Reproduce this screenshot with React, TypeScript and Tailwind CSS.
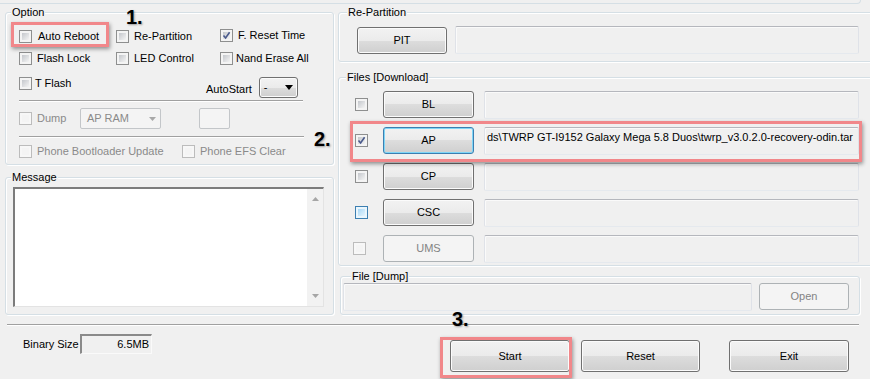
import type { ReactNode } from "react";

type CheckState = "off" | "on" | "disabled" | "hot";

function Check({ state = "off" }: { state?: CheckState }) {
  const outer =
    state === "disabled"
      ? "border-[#bcbcbc] bg-[#f7f7f7]"
      : state === "hot"
        ? "border-[#3c7fb1] bg-[#eaf6fd]"
        : "border-[#8e8f8f] bg-[#f4f4f4]";
  const inner =
    state === "disabled"
      ? "bg-[#f4f4f4]"
      : state === "hot"
        ? "bg-[linear-gradient(135deg,#a9d8f6,#e6f5fe)]"
        : "bg-[linear-gradient(135deg,#c4c7cc,#f4f4f4)]";
  return (
    <span
      className={`relative flex h-[13px] w-[13px] shrink-0 border p-[2px] ${outer}`}
    >
      <span className={`h-full w-full ${inner}`} />
      {state === "on" && (
        <svg
          className="absolute inset-0"
          width="11"
          height="11"
          viewBox="0 0 11 11"
        >
          <path
            d="M2.5 5.5 L4.6 8 L8.6 2.2"
            fill="none"
            stroke="#4a5a8c"
            strokeWidth="1.6"
          />
        </svg>
      )}
    </span>
  );
}

type BtnKind = "normal" | "focus" | "disabled";

function Btn({
  children,
  kind = "normal",
  className = "",
}: {
  children: ReactNode;
  kind?: BtnKind;
  className?: string;
}) {
  const look =
    kind === "disabled"
      ? "border-[#adb2b5] bg-[#f4f4f4] text-[#838383]"
      : kind === "focus"
        ? "border-[#3c7fb1] bg-[linear-gradient(to_bottom,#f2f2f2_0%,#ebebeb_50%,#dddddd_50%,#cfcfcf_100%)] shadow-[inset_0_0_0_1px_#7fd6f7]"
        : "border-[#707070] bg-[linear-gradient(to_bottom,#f2f2f2_0%,#ebebeb_50%,#dddddd_50%,#cfcfcf_100%)] shadow-[inset_0_0_0_1px_#fbfbfb]";
  return (
    <div
      className={`flex shrink-0 items-center justify-center rounded-[3px] border ${look} ${className}`}
    >
      {children}
    </div>
  );
}

function Field({
  children,
  className = "",
}: {
  children?: ReactNode;
  className?: string;
}) {
  return (
    <div
      className={`shrink-0 overflow-hidden whitespace-nowrap rounded-[2px] border border-t-[#b5b7bd] border-l-[#dfe2e8] border-r-[#dfe2e8] border-b-[#e5e9ee] bg-[#f0f0f0] shadow-[inset_1px_1px_0_#fafafa] ${className}`}
    >
      {children}
    </div>
  );
}

function Group({
  label,
  labelLeft,
  className = "",
  children,
}: {
  label: string;
  labelLeft: string;
  className?: string;
  children?: ReactNode;
}) {
  return (
    <div
      className={`relative rounded-[3px] border border-[#d5dfe5] shadow-[inset_1px_1px_0_#fff,1px_1px_0_#fff] ${className}`}
    >
      <span
        className={`absolute -top-[7px] bg-[#f0f0f0] px-[1px] leading-[13px] ${labelLeft}`}
      >
        {label}
      </span>
      {children}
    </div>
  );
}

function Sep({ className = "" }: { className?: string }) {
  return (
    <div
      className={`h-[2px] border-t border-b border-t-[#a0a0a0] border-b-white ${className}`}
    />
  );
}

const fileRows: {
  name: string;
  check: CheckState;
  kind: BtnKind;
  path?: string;
}[] = [
  { name: "BL", check: "off", kind: "normal" },
  {
    name: "AP",
    check: "on",
    kind: "focus",
    path: "ds\\TWRP GT-I9152 Galaxy Mega 5.8 Duos\\twrp_v3.0.2.0-recovery-odin.tar",
  },
  { name: "CP", check: "off", kind: "normal" },
  { name: "CSC", check: "hot", kind: "normal" },
  { name: "UMS", check: "disabled", kind: "disabled" },
];

const mark =
  "pointer-events-none absolute border-[3px] border-[#f1878a] shadow-[1px_2px_4px_rgba(0,0,0,0.4)]";
const step =
  "pointer-events-none absolute font-bold text-[20px] leading-[20px] text-black [text-shadow:1px_1px_2px_rgba(0,0,0,0.35)]";

export default function App() {
  return (
    <div className="relative h-[379px] w-[870px] overflow-hidden bg-[#f0f0f0] font-['Liberation_Sans',Arial,sans-serif] text-[11px] leading-[13px] text-black">
      <div className="h-[4px] w-[861px] rounded-br-[4px] border-r border-b border-[#d5dfe5]" />

      <div className="flex pt-[8px] pl-[5px]">
        {/* left column */}
        <div className="w-[329px] shrink-0">
          <Group label="Option" labelLeft="left-[5px]" className="h-[153px]">
            <div className="pt-[17px] pl-[13px]">
              <div className="flex h-[13px] items-center">
                <div className="flex w-[97px] items-center">
                  <Check />
                  <span className="ml-[6px]">Auto Reboot</span>
                </div>
                <div className="flex w-[104px] items-center">
                  <Check />
                  <span className="ml-[5px]">Re-Partition</span>
                </div>
                <div className="-mt-[2px] flex items-center">
                  <Check state="on" />
                  <span className="ml-[5px]">F. Reset Time</span>
                </div>
              </div>
              <div className="mt-[9px] flex h-[13px] items-center">
                <div className="flex w-[97px] items-center">
                  <Check />
                  <span className="ml-[5px]">Flash Lock</span>
                </div>
                <div className="flex w-[104px] items-center">
                  <Check />
                  <span className="ml-[5px]">LED Control</span>
                </div>
                <div className="-mt-[1px] flex items-center">
                  <Check />
                  <span className="ml-[3px]">Nand Erase All</span>
                </div>
              </div>
              <div className="mt-[12px] flex items-start">
                <div className="flex h-[13px] w-[187px] items-center">
                  <Check />
                  <span className="ml-[3px]">T Flash</span>
                </div>
                <div className="flex h-[21px] items-center">
                  <span className="mt-[3px]">AutoStart</span>
                  <Btn className="ml-[7px] h-[21px] w-[39px] !justify-between px-[4px]">
                    <span>-</span>
                    <svg width="8" height="5" viewBox="0 0 8 5">
                      <path d="M0 0 H8 L4 5 Z" fill="#000" />
                    </svg>
                  </Btn>
                </div>
              </div>
              <Sep className="mt-[2px] w-[284px]" />
              <div className="mt-[6px] flex h-[21px] items-center text-[#8a8a8a]">
                <div className="flex w-[61px] items-center">
                  <Check state="disabled" />
                  <span className="ml-[5px]">Dump</span>
                </div>
                <div className="flex h-[21px] w-[81px] items-center justify-between rounded-[2px] border border-[#c3c6c9] bg-[#f4f4f4] pr-[4px] pl-[6px]">
                  <span>AP RAM</span>
                  <svg width="7" height="4" viewBox="0 0 7 4">
                    <path d="M0 0 H7 L3.5 4 Z" fill="#a8a8a8" />
                  </svg>
                </div>
                <div className="ml-[38px] h-[21px] w-[31px] rounded-[2px] border border-[#c3c6c9] bg-[#f4f4f4]" />
              </div>
              <Sep className="mt-[7px] w-[285px]" />
              <div className="mt-[7px] flex h-[13px] items-center text-[#8a8a8a]">
                <div className="flex w-[163px] items-center">
                  <Check state="disabled" />
                  <span className="ml-[5px]">Phone Bootloader Update</span>
                </div>
                <Check state="disabled" />
                <span className="ml-[5px]">Phone EFS Clear</span>
              </div>
            </div>
          </Group>

          <Group
            label="Message"
            labelLeft="left-[5px]"
            className="mt-[12px] h-[138px]"
          >
            <div className="pt-[9px] pl-[7px]">
              <div className="flex h-[120px] w-[311px] border-t-2 border-l-2 border-r border-b border-t-[#7c7c7c] border-l-[#7c7c7c] border-r-[#e3e3e3] border-b-[#e3e3e3] bg-white">
                <div className="flex-1" />
                <div className="flex w-[16px] flex-col items-center justify-between bg-[#f2f2f2] py-[8px]">
                  <svg width="7" height="4" viewBox="0 0 7 4">
                    <path d="M0 4 H7 L3.5 0 Z" fill="#a6a6a6" />
                  </svg>
                  <svg width="7" height="4" viewBox="0 0 7 4">
                    <path d="M0 0 H7 L3.5 4 Z" fill="#a6a6a6" />
                  </svg>
                </div>
              </div>
            </div>
          </Group>
        </div>

        {/* right column */}
        <div className="ml-[4px] w-[540px] shrink-0">
          <Group
            label="Re-Partition"
            labelLeft="left-[8px]"
            className="h-[50px]"
          >
            <div className="flex items-center pt-[13px] pl-[18px]">
              <Btn className="h-[27px] w-[90px]">PIT</Btn>
              <Field className="ml-[8px] h-[28px] w-[404px]" />
            </div>
          </Group>

          <Group
            label="Files [Download]"
            labelLeft="left-[7px]"
            className="mt-[15px] h-[189px]"
          >
            <div className="flex flex-col gap-[9px] pt-[13px] pl-[16px]">
              {fileRows.map((row) => (
                <div key={row.name} className="flex h-[27px] items-center">
                  <div className={row.name === "UMS" ? "-ml-[2px] mr-[2px]" : ""}>
                    <Check state={row.check} />
                  </div>
                  <Btn kind={row.kind} className="ml-[15px] h-[27px] w-[91px]">
                    {row.name}
                  </Btn>
                  <Field className="ml-[10px] h-[28px] w-[375px] px-[2px] pt-[3px]">
                    {row.path}
                  </Field>
                </div>
              ))}
            </div>
          </Group>

          <Group
            label="File [Dump]"
            labelLeft="left-[10px]"
            className="mt-[10px] ml-[2px] h-[39px] w-[520px]"
          >
            <div className="flex items-start pt-[6px] pl-[2px]">
              <Field className="h-[28px] w-[409px]" />
              <Btn kind="disabled" className="ml-[7px] h-[27px] w-[90px]">
                Open
              </Btn>
            </div>
          </Group>
        </div>
      </div>

      <Sep className="mt-[9px] ml-[7px] w-[852px]" />

      <div className="flex items-start">
        <div className="mt-[8px] ml-[23px] flex items-center">
          <span className="w-[57px]">Binary Size</span>
          <div className="flex h-[20px] w-[72px] items-center justify-end border-t-2 border-l-2 border-r border-b border-t-[#8a8a8a] border-l-[#8a8a8a] border-r-[#fafafa] border-b-[#fafafa] bg-[#f0f0f0] pr-[2px]">
            6.5MB
          </div>
        </div>
        <Btn className="mt-[14px] ml-[298px] h-[32px] w-[120px]">Start</Btn>
        <Btn className="mt-[14px] ml-[11px] h-[32px] w-[119px]">Reset</Btn>
        <Btn className="mt-[14px] ml-[29px] h-[32px] w-[120px]">Exit</Btn>
      </div>

      {/* tutorial annotations drawn over the window */}
      <div className={`${mark} top-[22px] left-[11px] h-[25px] w-[98px]`} />
      <div className={`${mark} top-[121px] left-[350px] h-[41px] w-[512px]`} />
      <div className={`${mark} top-[337px] left-[440px] h-[41px] w-[132px]`} />
      <span className={`${step} top-[7px] left-[126px]`}>1.</span>
      <span className={`${step} top-[129px] left-[314px]`}>2.</span>
      <span className={`${step} top-[309px] left-[452px]`}>3.</span>
    </div>
  );
}
